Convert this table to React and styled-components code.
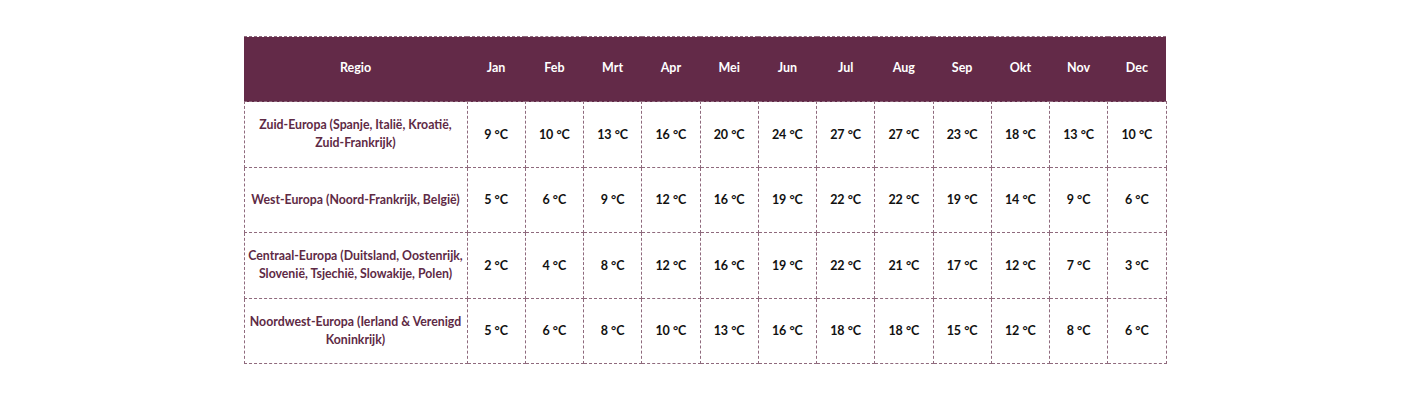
import styled, { createGlobalStyle } from 'styled-components'

const GlobalStyle = createGlobalStyle`
  body {
    margin: 0;
    background: #ffffff;
    font-family: Lato, "Open Sans", sans-serif;
  }
`

const Wrapper = styled.div`
  padding-top: 36px;
  display: flex;
  justify-content: center;
`

const Table = styled.table`
  width: 923px;
  border-collapse: collapse;
  table-layout: fixed;
  font-family: Lato, "Open Sans", sans-serif;
  font-weight: 700;
  font-size: 12.5px;
`

const HeadRow = styled.tr`
  background: #632a48;
  height: 65px;
`

const HeadCell = styled.th`
  color: #ffffff;
  font-weight: 700;
  text-align: center;
  padding: 0 0 3px;
  width: ${(p) => (p.$wide ? '223px' : 'auto')};
  border-top: 1px dashed #8f6a7d;
`

const Row = styled.tr`
  height: 65.5px;
`

const RegionCell = styled.td`
  color: #5e2a45;
  text-align: center;
  font-size: 12.3px;
  line-height: 18px;
  padding: 0;
  border: 1px dashed #8f6a7d;
`

const ValueCell = styled.td`
  color: #111111;
  text-align: center;
  padding: 0;
  border: 1px dashed #8f6a7d;
`

const months = ['Jan', 'Feb', 'Mrt', 'Apr', 'Mei', 'Jun', 'Jul', 'Aug', 'Sep', 'Okt', 'Nov', 'Dec']

const rows = [
  {
    region: 'Zuid-Europa (Spanje, Italië, Kroatië, Zuid-Frankrijk)',
    temps: [9, 10, 13, 16, 20, 24, 27, 27, 23, 18, 13, 10],
  },
  {
    region: 'West-Europa (Noord-Frankrijk, België)',
    temps: [5, 6, 9, 12, 16, 19, 22, 22, 19, 14, 9, 6],
  },
  {
    region: 'Centraal-Europa (Duitsland, Oostenrijk, Slovenië, Tsjechië, Slowakije, Polen)',
    temps: [2, 4, 8, 12, 16, 19, 22, 21, 17, 12, 7, 3],
  },
  {
    region: 'Noordwest-Europa (Ierland & Verenigd Koninkrijk)',
    temps: [5, 6, 8, 10, 13, 16, 18, 18, 15, 12, 8, 6],
  },
]

export default function App() {
  return (
    <>
      <GlobalStyle />
      <Wrapper>
        <Table>
          <thead>
            <HeadRow>
              <HeadCell $wide>Regio</HeadCell>
              {months.map((m) => (
                <HeadCell key={m}>{m}</HeadCell>
              ))}
            </HeadRow>
          </thead>
          <tbody>
            {rows.map((r) => (
              <Row key={r.region}>
                <RegionCell>{r.region}</RegionCell>
                {r.temps.map((t, i) => (
                  <ValueCell key={i}>{t} °C</ValueCell>
                ))}
              </Row>
            ))}
          </tbody>
        </Table>
      </Wrapper>
    </>
  )
}
